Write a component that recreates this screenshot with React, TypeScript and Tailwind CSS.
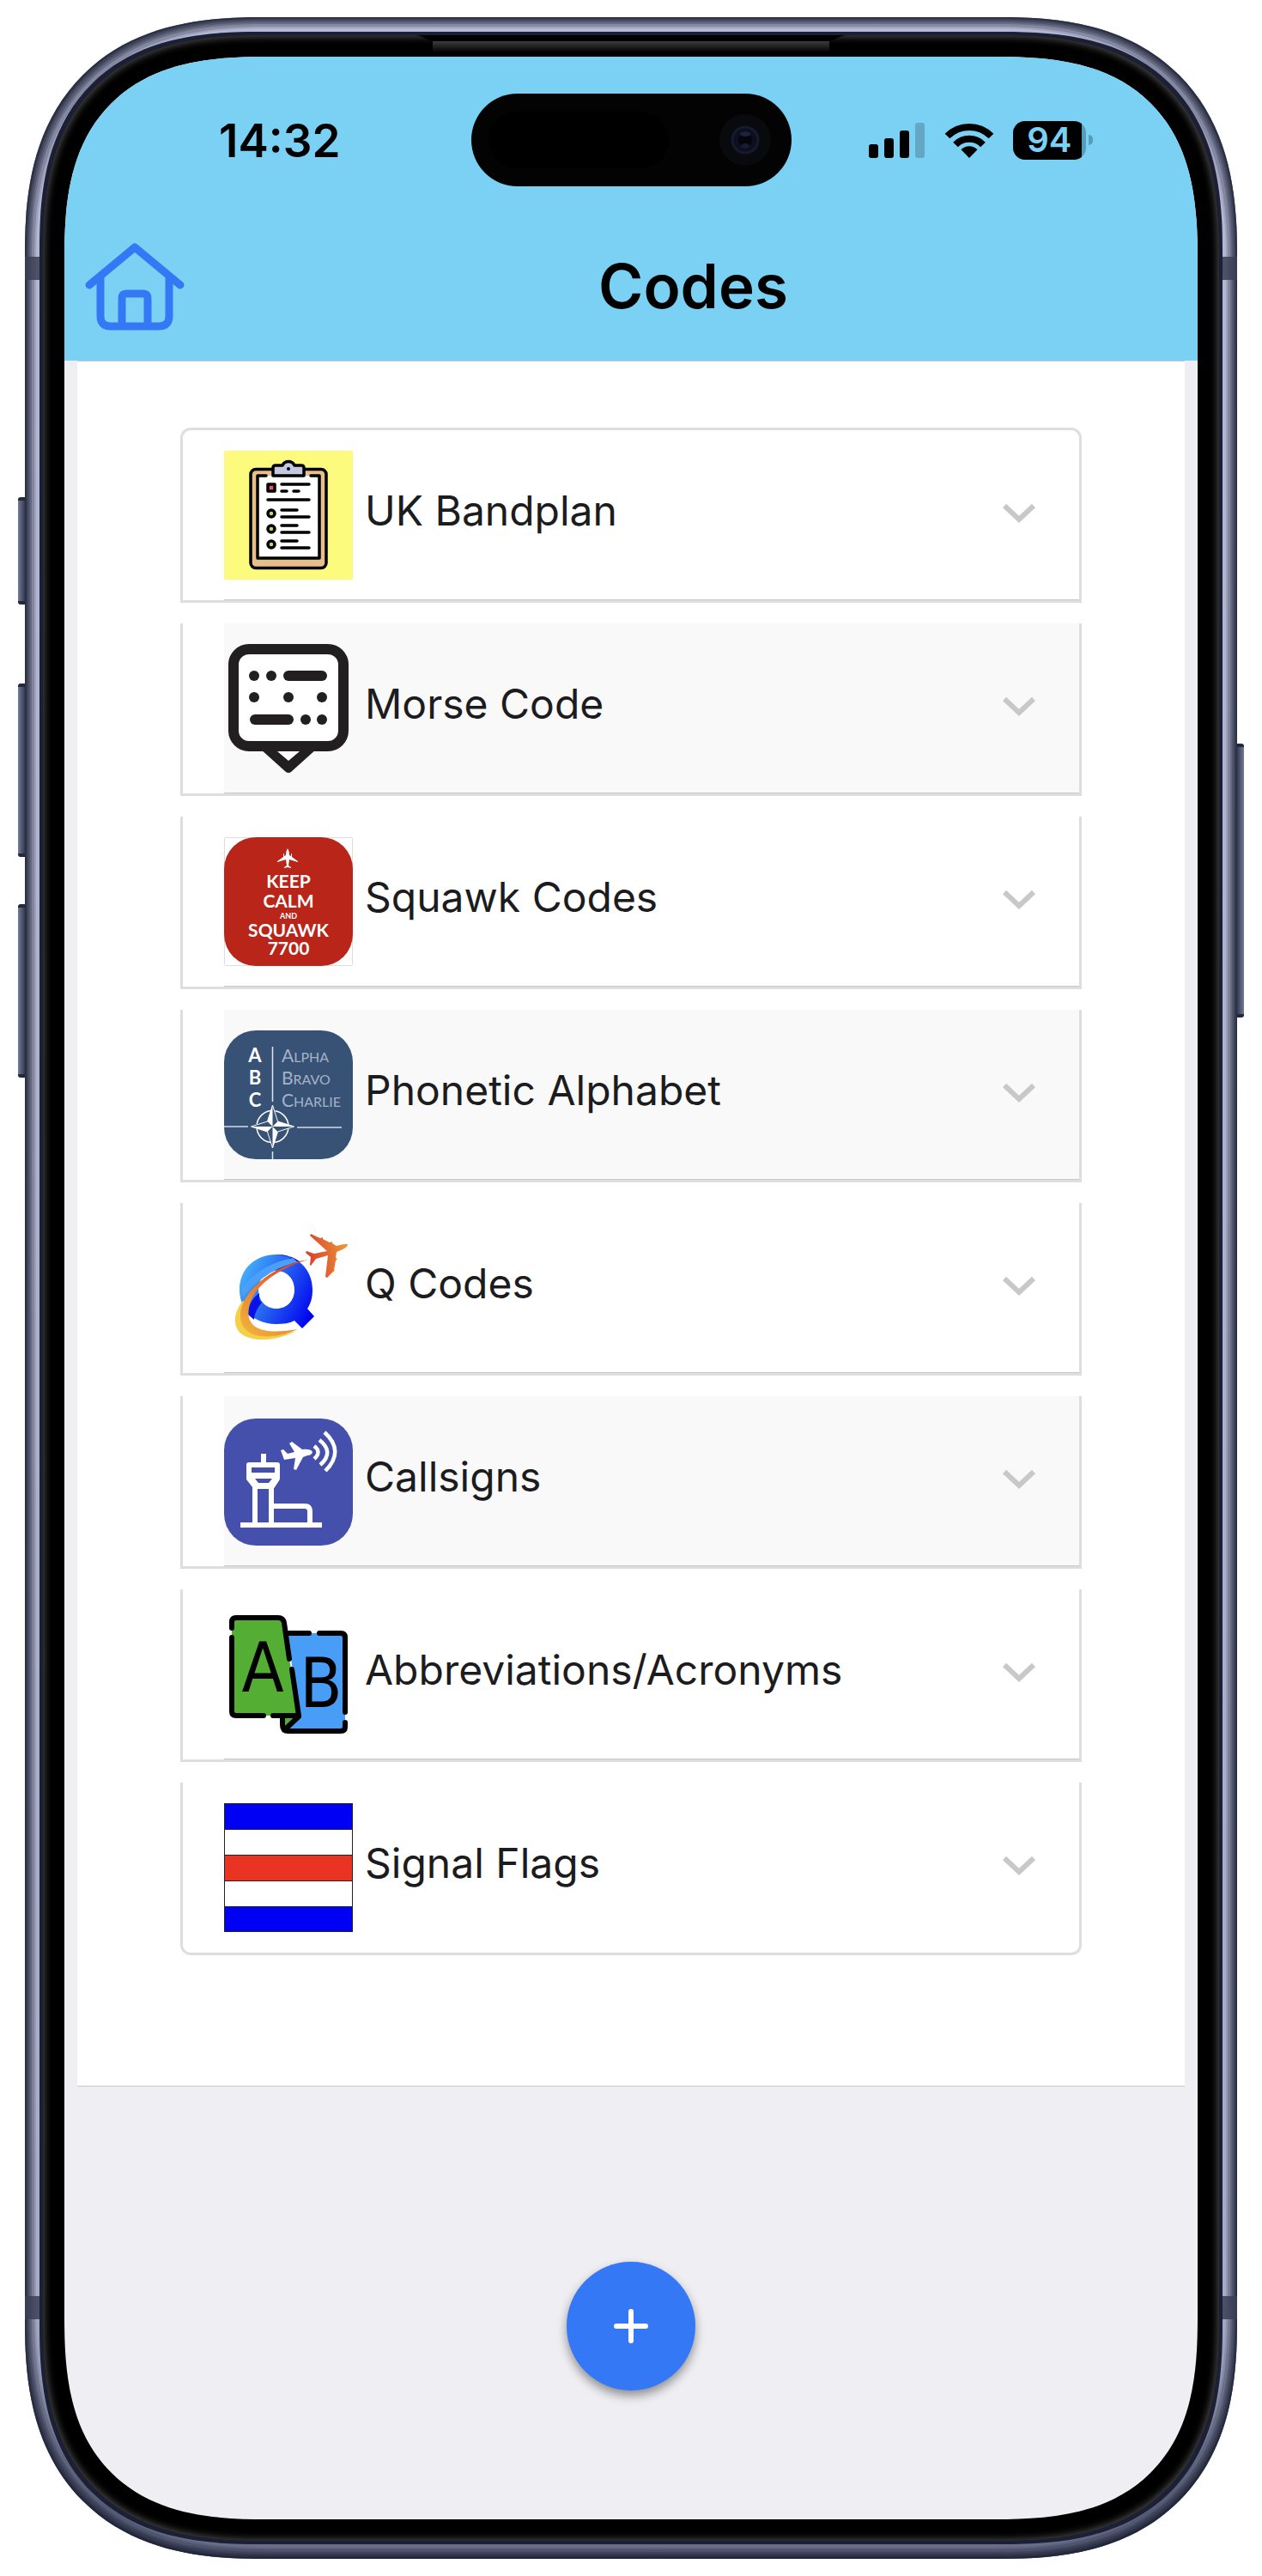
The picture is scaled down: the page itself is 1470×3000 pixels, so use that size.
import React, { useState } from 'react';

type IconProps = { className?: string };

interface CodeSection {
  id: string;
  name: string;
  Icon: (props: IconProps) => React.ReactElement;
}

const SECTIONS: CodeSection[] = [
  { id: 'bandplan', name: 'UK Bandplan', Icon: BandplanIcon },
  { id: 'morse', name: 'Morse Code', Icon: MorseIcon },
  { id: 'squawk', name: 'Squawk Codes', Icon: SquawkIcon },
  { id: 'phonetic', name: 'Phonetic Alphabet', Icon: PhoneticIcon },
  { id: 'q', name: 'Q Codes', Icon: QIcon },
  { id: 'callsigns', name: 'Callsigns', Icon: CallsignsIcon },
  { id: 'abbreviations', name: 'Abbreviations/Acronyms', Icon: AbbreviationsIcon },
  { id: 'flags', name: 'Signal Flags', Icon: SignalFlagIcon },
];

export default function App() {
  return (
    <div className="min-h-screen flex bg-white px-[29px] py-5 font-['Inter','Liberation_Sans',sans-serif] text-black">
      <PhoneFrame>
        <Header />
        <main className="flex-1 flex flex-col px-[15px]">
          <div className="bg-white border-y border-[#c8c7cc] px-[120px] pt-[77px] pb-[152px]">
            <CodeList />
          </div>
          <div className="flex justify-center mt-[204px]">
            <button
              aria-label="Add"
              className="w-[150px] h-[150px] rounded-full bg-[#3478f6] flex items-center justify-center shadow-[0_6px_12px_rgba(0,0,0,0.4)]"
            >
              <svg viewBox="0 0 40 40" className="w-10 h-10" stroke="#fff" strokeWidth="6" strokeLinecap="round">
                <path d="M20 3v34M3 20h34" />
              </svg>
            </button>
          </div>
        </main>
      </PhoneFrame>
    </div>
  );
}

function PhoneFrame({ children }: { children: React.ReactNode }) {
  return (
    <div className="relative flex-1 flex">
      <SideButton className="-left-2 top-[559px] h-[125px] rounded-l-[3px] bg-linear-to-r" />
      <SideButton className="-left-2 top-[776px] h-[202px] rounded-l-[3px] bg-linear-to-r" />
      <SideButton className="-left-2 top-[1033px] h-[202px] rounded-l-[3px] bg-linear-to-r" />
      <SideButton className="-right-2 top-[846px] h-[319px] rounded-r-[3px] bg-linear-to-l" />

      <div className="relative flex-1 flex p-[21px] overflow-hidden rounded-[275px] [corner-shape:superellipse(1.3)] bg-[linear-gradient(to_bottom,#b4b8d2,#a6abc6_90%,#7f859f_96%,#646a84)] shadow-[inset_0_0_0_2px_rgba(22,27,46,0.5),inset_0_0_0_4px_rgba(22,27,46,0.3),inset_0_0_0_6px_rgba(22,27,46,0.25),inset_0_0_0_8px_rgba(22,27,46,0.25),inset_0_0_0_11px_rgba(22,27,46,0.2),inset_0_0_0_13px_rgba(22,27,46,0.12)]">
        <AntennaBand className="left-0 top-[279px]" />
        <AntennaBand className="right-0 top-[279px]" />
        <AntennaBand className="left-0 bottom-[279px]" />
        <AntennaBand className="right-0 bottom-[279px]" />
        <div className="relative flex-1 flex p-[25px] rounded-[254px] [corner-shape:superellipse(1.35)] bg-black shadow-[0_0_0_4px_#1b2036,inset_0_0_8px_2px_#484848]">
          <svg viewBox="0 0 506 20" className="absolute left-1/2 -translate-x-1/2 top-0 w-[506px] h-5">
            <defs>
              <linearGradient id="earpiece" x1="0" y1="0" x2="0" y2="1">
                <stop offset="0" stopColor="#3c3c3c" />
                <stop offset="1" stopColor="#000" />
              </linearGradient>
            </defs>
            <path d="M22 7h462v13H22z" fill="url(#earpiece)" />
            <path d="M0 0c12 0 14 7 26 7h454c12 0 14-7 26-7z" fill="#000" />
          </svg>
          <div className="relative flex-1 flex flex-col overflow-hidden rounded-[236px] [corner-shape:superellipse(1.4)] bg-[#eeeef3]">
            {children}
          </div>
        </div>
      </div>
    </div>
  );
}

function SideButton({ className }: { className: string }) {
  return <div className={`absolute w-2 from-[#757c99] to-[#343a50] border-y-4 border-[#23283c] ${className}`} />;
}

function AntennaBand({ className }: { className: string }) {
  return <div className={`absolute w-[21px] h-[27px] bg-[#3b4056]/85 ${className}`} />;
}

function Header() {
  return (
    <header className="bg-[#7bd1f4] pt-[43px]">
      <div className="grid grid-cols-[1fr_373px_1fr] items-center">
        <div className="pl-7 pt-[2px] text-center text-[53px] leading-none font-semibold">14:32</div>
        <div className="h-[108px] rounded-full bg-[#030303] flex items-center justify-between pl-5 pr-6">
          <div className="w-[210px] h-[66px] rounded-full bg-black" />
          <div className="w-[60px] h-[60px] rounded-full bg-[#090a0d] flex items-center justify-center">
            <svg viewBox="0 0 34 34" className="w-[34px] h-[34px]">
              <circle cx="17" cy="17" r="15" fill="#0d0f1c" stroke="#161a30" strokeWidth="3" />
              <circle cx="17" cy="17" r="8" fill="#05060b" />
              <ellipse cx="17" cy="10" rx="6" ry="3" fill="#1c2240" />
              <ellipse cx="17" cy="24" rx="5" ry="3" fill="#171c36" />
            </svg>
          </div>
        </div>
        <div className="flex items-center justify-center pr-8">
          <svg viewBox="0 0 65 41" className="w-[65px] h-[41px]">
            <rect x="0" y="25" width="11" height="16" rx="3" />
            <rect x="18" y="18" width="11" height="23" rx="3" />
            <rect x="36" y="9" width="11" height="32" rx="3" />
            <rect x="54" y="0" width="11" height="41" rx="3" opacity="0.2" />
          </svg>
          <svg viewBox="0 0 58 42" className="ml-[23px] w-[58px] h-[42px]" fill="none" stroke="#000" strokeWidth="8">
            <path d="M3.500 16.500a36 36 0 0 1 51 0" />
            <path d="M13 26.500a22.500 22.500 0 0 1 32 0" />
            <path d="M29 42l-9.500-9.800a13.500 13.500 0 0 1 19 0z" fill="#000" stroke="none" />
          </svg>
          <div className="ml-[22px] flex items-center gap-[3px]">
            <div className="h-[45px] w-[85px] rounded-[14px] bg-[linear-gradient(to_right,#000_80px,#579cb8_80px)] flex items-center justify-center text-[#7bd1f4] text-[40px] leading-none font-semibold">
              94
            </div>
            <div className="w-[5px] h-3 rounded-r-full bg-[#579cb8]" />
          </div>
        </div>
      </div>
      <nav className="flex items-center h-[203px] pt-[30px] pl-6 gap-[5px]">
        <a href="#home" aria-label="Home">
          <svg viewBox="0 0 116 104" className="w-[116px] h-[104px]" fill="none" stroke="#3478f6" strokeWidth="9" strokeLinecap="round" strokeLinejoin="round">
            <path d="M5 50 58 6l53 44" />
            <path d="M18 40v46q0 12 12 12h56q12 0 12-12V40" />
            <path d="M43 97V65q0-5 5-5h20q5 0 5 5v32" />
          </svg>
        </a>
        <h1 className="flex-1 text-center text-[71px] leading-none font-semibold">Codes</h1>
      </nav>
    </header>
  );
}

function CodeList() {
  const [open, setOpen] = useState<string | null>(null);

  return (
    <ul className="flex flex-col gap-6">
      {SECTIONS.map(({ id, name, Icon }) => (
        <li
          key={id}
          className="group border-x-3 border-b-3 border-[#dedede] pl-12 first:border-t-3 first:rounded-t-xl last:rounded-b-xl"
        >
          <button
            aria-expanded={open === id}
            onClick={() => setOpen(open === id ? null : id)}
            className="w-full h-[198px] flex items-center gap-[14px] pr-[51px] text-left group-even:not-group-last:bg-[#f9f9f9] not-group-last:shadow-[inset_0_-1px_0_#c8c7cc]"
          >
            <Icon className="w-[150px] h-[150px] shrink-0" />
            <span className="flex-1 pb-[10px] text-[48px] leading-[60px] text-[#1c1c1e]">{name}</span>
            <svg viewBox="0 0 38 24" className="w-[38px] h-6 mb-1" fill="none" stroke="#c8c8c8" strokeWidth="6">
              <path d="M2 3l17 16L36 3" />
            </svg>
          </button>
        </li>
      ))}
    </ul>
  );
}

function BandplanIcon({ className }: IconProps) {
  return (
    <svg viewBox="0 0 150 150" className={className} fill="none" stroke="#000" strokeWidth="3.500" strokeLinecap="round" strokeLinejoin="round">
      <rect width="150" height="150" fill="#fdfb7e" stroke="none" />
      <rect x="31" y="21.500" width="88" height="115" rx="6" fill="#e6bf8d" />
      <path d="M39 29h72v96H39z" fill="#fff" stroke="none" />
      <path d="M49 29H39v96h72V29h-10" />
      <path d="M57 29v-9q0-3 3-3h8q2-4.500 7-4.500t7 4.500h8q3 0 3 3v9z" fill="#c4c9e2" />
      <circle cx="75" cy="21" r="2" fill="#000" stroke="none" />
      <rect x="51" y="39" width="8" height="8" fill="#e8556d" />
      <path d="M67 39h32M67 47h6M81 47h6M51 57h48" />
      {[73, 91, 109].map(y => (
        <g key={y}>
          <circle cx="55" cy={y} r="4" fill="#b5dc7c" />
          <path d={`M67 ${y - 4}h18M67 ${y + 4}h32`} />
        </g>
      ))}
    </svg>
  );
}

function MorseIcon({ className }: IconProps) {
  return (
    <svg viewBox="0 0 150 150" className={className} fill="#231f20">
      <path d="M42 122h66L78 149q-3 2-6 0z" />
      <rect x="11" y="6" width="128" height="113" rx="18" fill="#fff" stroke="#231f20" strokeWidth="12" />
      <path d="M62 125h26l-13 11z" fill="#fff" />
      <circle cx="35" cy="37" r="6" />
      <circle cx="55" cy="37" r="6" />
      <rect x="69" y="31" width="51" height="12" rx="6" />
      <circle cx="35" cy="62" r="6" />
      <circle cx="75" cy="62" r="6" />
      <circle cx="114" cy="62" r="6" />
      <rect x="30" y="82" width="51" height="12" rx="6" />
      <circle cx="95" cy="88" r="6" />
      <circle cx="114" cy="88" r="6" />
    </svg>
  );
}

function SquawkIcon({ className }: IconProps) {
  return (
    <svg viewBox="0 0 150 150" className={`${className} font-[Lato,sans-serif] font-bold`} fill="#fff" textAnchor="middle">
      <rect x="0.500" y="0.500" width="149" height="149" rx="1" stroke="#dcdcdc" />
      <rect width="150" height="150" rx="37" fill="#b92519" />
      <path d="M74 13q2 3 2 8l2 1v-3h1v4l7 5v1l-10-3-1 7 3 2v1l-4-1-4 1v-1l3-2-1-7-10 3v-1l7-5v-4h1v3l2-1q0-5 2-8z" />
      <text x="75" y="59" fontSize="21">KEEP</text>
      <text x="75" y="82" fontSize="21">CALM</text>
      <text x="75" y="95" fontSize="9">AND</text>
      <text x="75" y="116" fontSize="21">SQUAWK</text>
      <text x="75" y="137" fontSize="21">7700</text>
    </svg>
  );
}

function PhoneticIcon({ className }: IconProps) {
  const words = ['Alpha', 'Bravo', 'Charlie'];

  return (
    <svg viewBox="0 0 150 150" className={`${className} font-[Lato,sans-serif]`} fill="#fff">
      <rect width="150" height="150" rx="37" fill="#385275" />
      {words.map((word, i) => (
        <g key={word}>
          <text x="36" y={37 + i * 26} fontSize="22" fontWeight="700" textAnchor="middle">{word[0]}</text>
          <text x="67" y={37 + i * 26} fontSize="21" fill="#a3b2c8">
            {word[0]}
            <tspan fontSize="16">{word.slice(1).toUpperCase()}</tspan>
          </text>
        </g>
      ))}
      <path d="M56.500 19v64M56.500 141v9" stroke="#dfe6ef" strokeWidth="1.500" />
      <path d="M0 112h28M85 113h52" stroke="#a9bad0" strokeWidth="2" />
      <circle cx="56.500" cy="112" r="18.500" fill="none" stroke="#fff" strokeWidth="1.500" strokeDasharray="24 5.060" strokeDashoffset="-2.500" />
      <path d="M56.500 87l6 19 19 6-19 6-6 19-6-19-19-6 19-6z" fill="#385275" stroke="#fff" strokeWidth="1" />
      <path d="M56.500 87v25l-6-6zM81.500 112h-25l6-6zM56.500 137v-25l6 6zM31.500 112h25l-6 6z" />
    </svg>
  );
}

function QIcon({ className }: IconProps) {
  return (
    <svg viewBox="0 0 150 150" className={className}>
      <defs>
        <linearGradient id="q-ring" x1="0" y1="0.300" x2="1" y2="0.800">
          <stop offset="0" stopColor="#45aefa" />
          <stop offset="0.450" stopColor="#2563f0" />
          <stop offset="1" stopColor="#0000f0" />
        </linearGradient>
        <linearGradient id="q-swoosh" x1="0.900" y1="0" x2="0.200" y2="1">
          <stop offset="0" stopColor="#dc3a2c" />
          <stop offset="0.450" stopColor="#e4702f" />
          <stop offset="1" stopColor="#eeb03c" />
        </linearGradient>
        <linearGradient id="q-plane" x1="0" y1="0.500" x2="1" y2="0.300">
          <stop offset="0" stopColor="#dc3a2c" />
          <stop offset="1" stopColor="#e99a36" />
        </linearGradient>
      </defs>
      <path
        d="M61 36c24 0 42 17 42 41 0 9-2 16-6 22l8 9-14 14-9-9c-6 3-13 4-21 4-25 0-43-16-43-40s18-41 43-41zm0 19c-12 0-21 9-21 22s9 22 21 22 21-9 21-22-9-22-21-22z"
        fill="url(#q-ring)"
        fillRule="evenodd"
      />
      <path d="M61 36c12 0 20 3 27 8-8 2-16 5-25 10l-5-1 20-14z" fill="#0a12e8" />
      <path d="M20 78C32 58 54 45 80 40l6 5C60 50 38 66 22 86z" fill="#4aa0f8" />
      <path d="M28 106c0-11 5-19 13-25 0 8 0 8 3 11-5 6-9 13-9 20z" fill="#0a12e8" />
      <path d="M22 90c-12 14-12 31-1 39 15 10 42 7 63-4-21 6-45 6-54-5-9-10-6-20-3-28z" fill="#f6cf45" />
      <path d="M98 42C70 46 40 63 25 87c-9 15-8 31 3 39 13 9 38 6 58-3-18 3-40 5-51-4-10-8-8-24 1-38C48 64 70 50 98 42z" fill="url(#q-swoosh)" />
      <path
        d="M144 25q-1 3-8 6l-5 2-1 7 2 1-2 2-2 11 1 1-2 1-7 7-2-1 3-25-14 4-6 8-1-1 1-9-6-5 1-2 9 3 15-3-20-18 1-2 11 5 3-1v2l8 4 3-1v2l5 3q11-3 13-2z"
        fill="url(#q-plane)"
      />
    </svg>
  );
}

function CallsignsIcon({ className }: IconProps) {
  return (
    <svg viewBox="0 0 150 150" className={className} fill="none" stroke="#fff" strokeWidth="6">
      <rect y="2" width="150" height="148" rx="37" fill="#4450ac" stroke="none" />
      <path d="M19 126h95M36 126V82M55 126V82M46 43v11" />
      <path d="M29 68V56h33v12zM29 68v4l7 9h20l6-9v-4" strokeLinejoin="round" />
      <path d="M36 79l-5-8h30l-5 8z" fill="#fff" strokeWidth="2" />
      <path d="M36 72h20l-4 5H40z" fill="#4450ac" stroke="none" />
      <path d="M56 104h38q6 0 6 6v16" />
      <path
        d="M103 41q-1 4-6 4l-5 2-8 15-3-1 2-13-13 2-4-11 3-1 5 5 8-2-6-10 3-2 12 9q10-1 12 3z"
        fill="#fff"
        stroke="none"
      />
      <path d="M105 34q9 7 0 15M111 27q18 14 1 29M117 18q24 22 1 45" strokeWidth="4.500" />
    </svg>
  );
}

function AbbreviationsIcon({ className }: IconProps) {
  return (
    <svg
      viewBox="0 0 150 150"
      className={`${className} font-['DejaVu_Sans_Condensed','Lato',sans-serif]`}
      fill="none"
      stroke="#000"
      strokeWidth="6"
      strokeLinecap="round"
      strokeLinejoin="round"
    >
      <path d="M74 27h62q5 0 5 5v104q0 5-5 5H70l17-18z" fill="#489df6" stroke="none" />
      <path d="M9 14q0-5 5-5h50q5 0 5 5l18 109-17 17-2-17H14q-5 0-5-5z" fill="#55ae34" stroke="none" />
      <path d="M9 21v-7q0-5 5-5h49q6 0 7 6l6 42M79 69l8 54H57M46 123H14q-5 0-5-5V32" />
      <path d="M75 27h24M111 27h25q5 0 5 5v87M141 131v5q0 5-5 5H75q-7 0-7-7v-10M87 124l-16 15" />
      <g fill="#000" stroke="none" fontSize="80" textAnchor="middle">
        <text x="45" y="95">A</text>
        <text x="113" y="113">B</text>
      </g>
    </svg>
  );
}

function SignalFlagIcon({ className }: IconProps) {
  return (
    <svg viewBox="0 0 150 150" className={className}>
      <rect width="150" height="150" fill="#fff" />
      <rect width="150" height="30" fill="#0000f5" />
      <rect y="60" width="150" height="30" fill="#e93323" />
      <rect y="120" width="150" height="30" fill="#0000f5" />
      <path d="M0.500 0.500h149v149H0.500zM0 30.500h150M0 60.500h150M0 90.500h150M0 120.500h150" fill="none" stroke="#222" />
    </svg>
  );
}
